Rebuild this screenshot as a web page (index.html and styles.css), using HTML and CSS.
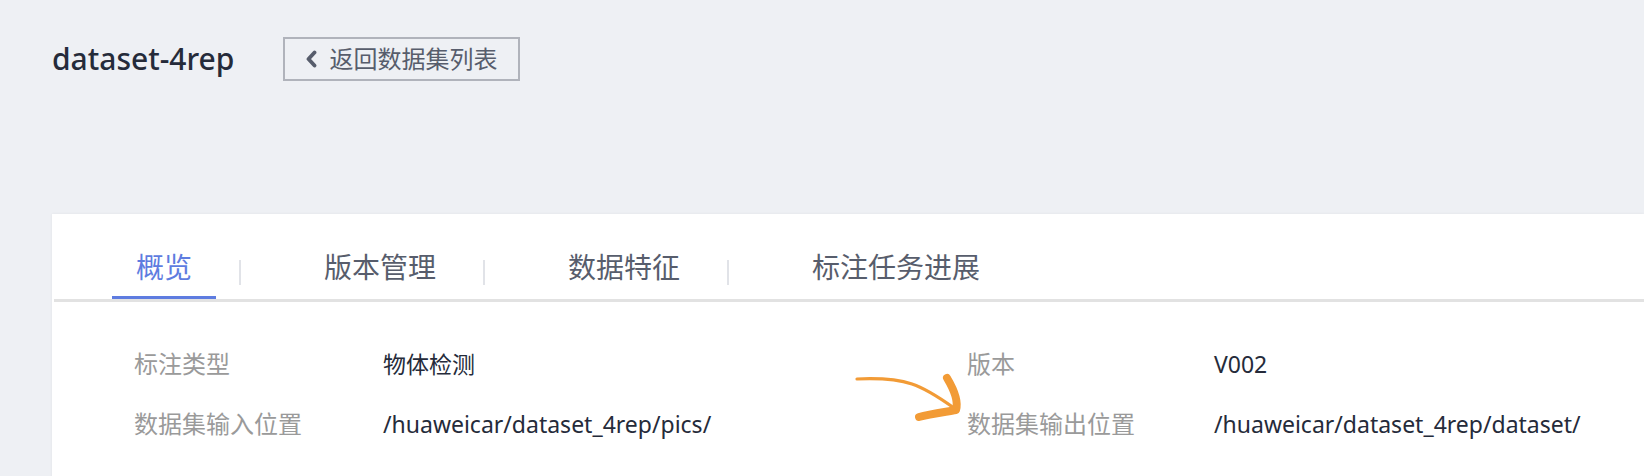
FILE: index.html
```html
<!DOCTYPE html>
<html lang="zh-CN">
<head>
<meta charset="utf-8">
<title>dataset-4rep</title>
<link rel="stylesheet" href="styles.css">
</head>
<body>
<header class="page-head">
  <h1 class="title">dataset-4rep</h1>
  <button class="back-btn" type="button">
    <svg class="chev" width="12" height="18" viewBox="0 0 12 18"><path d="M9.5 2.5 L3.5 9 L9.5 15.5" fill="none" stroke="#575d6c" stroke-width="3.8" stroke-linecap="round" stroke-linejoin="round"/></svg>
    <span>返回数据集列表</span>
  </button>
</header>

<section class="card">
  <nav class="tabs">
    <div class="tab active">概览</div>
    <span class="sep"></span>
    <div class="tab">版本管理</div>
    <span class="sep"></span>
    <div class="tab">数据特征</div>
    <span class="sep"></span>
    <div class="tab">标注任务进展</div>
  </nav>
  <div class="info">
    <div class="label">标注类型</div>
    <div class="value">物体检测</div>
    <div class="label">版本</div>
    <div class="value">V002</div>
    <div class="label">数据集输入位置</div>
    <div class="value">/huaweicar/dataset_4rep/pics/</div>
    <div class="label">数据集输出位置</div>
    <div class="value">/huaweicar/dataset_4rep/dataset/</div>
  </div>
</section>

<svg class="annot-arrow" width="120" height="60" viewBox="0 0 120 60">
  <path d="M7 9 C 30 8, 50 10, 62 14 S 90 28, 104 38" fill="none" stroke="#f29b36" stroke-width="3.2" stroke-linecap="round"/>
  <path d="M97 8 C 103 18, 109 30, 106 40 C 95 42, 80 44, 69 47" fill="none" stroke="#f29b36" stroke-width="8" stroke-linecap="round" stroke-linejoin="round"/>
</svg>
</body>
</html>
```

FILE: styles.css
```css
html, body {
  margin: 0;
  padding: 0;
  overflow: hidden;
}

body {
  background: #eef0f4;
  font-family: "Noto Sans", "Noto Sans CJK SC", sans-serif;
  color: #252b3a;
  position: relative;
  height: 476px;
}

.page-head {
  display: flex;
  align-items: center;
  padding: 37px 0 0 52px;
  height: 44px;
}

.title {
  margin: 0 49px 0 0;
  font-size: 30px;
  font-weight: 500;
  line-height: 44px;
  color: #252b3a;
}

.back-btn {
  display: flex;
  align-items: center;
  gap: 12px;
  height: 44px;
  box-sizing: border-box;
  padding: 0 21px 0 20px;
  border: 2px solid #b0b3bb;
  background: transparent;
  font-family: "Noto Sans", "Noto Sans CJK SC", sans-serif;
  font-size: 24px;
  color: #575d6c;
  line-height: 1;
}

.chev {
  display: block;
}

.card {
  margin: 133px 0 0 52px;
  background: #ffffff;
  box-shadow: 0 0 3px rgba(0, 0, 0, 0.06);
  padding-bottom: 40px;
}

.tabs {
  display: flex;
  align-items: flex-start;
  margin-left: 2px;
  padding: 33px 0 0 58px;
  border-bottom: 3px solid #e2e2e2;
}

.tab {
  font-size: 28px;
  line-height: 40px;
  padding: 0 24px 9px;
  color: #575d6c;
  border-bottom: 3px solid transparent;
  white-space: nowrap;
}

.tab.active {
  color: #5e7ce0;
  border-bottom-color: #5e7ce0;
}

.sep {
  width: 2px;
  height: 25px;
  margin: 13px 59px 0 23px;
  background: #e1e3e8;
}

.info {
  display: grid;
  grid-template-columns: 249px 584px 247px 1fr;
  row-gap: 24px;
  padding: 44px 0 0 82px;
  font-size: 24px;
  line-height: 36px;
}

.label {
  color: #9a9a9a;
}

.value {
  color: #252b3a;
  font-size: 23px;
}

.annot-arrow {
  position: absolute;
  left: 850px;
  top: 370px;
}
```
